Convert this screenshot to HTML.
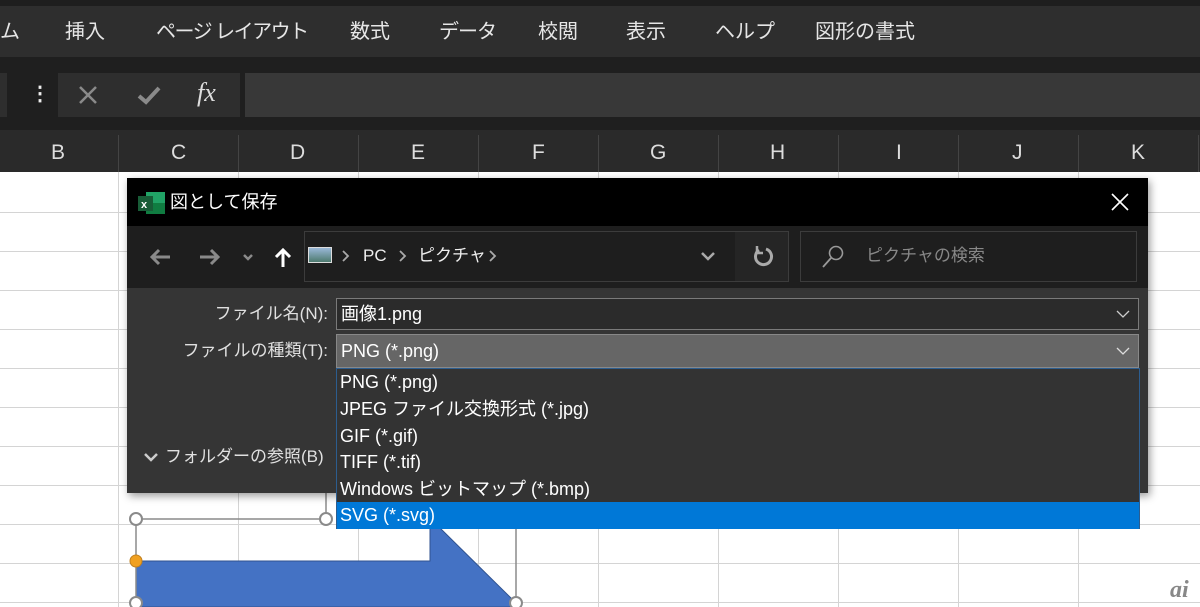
<!DOCTYPE html>
<html><head><meta charset="utf-8"><style>
*{margin:0;padding:0;box-sizing:border-box}
body{width:1200px;height:607px;overflow:hidden;position:relative;background:#fff;font-family:"Liberation Sans","Noto Sans CJK JP",sans-serif}
.a{position:absolute}
.t{position:absolute;white-space:nowrap;line-height:1}
</style></head><body>
<div class="a" style="left:0;top:0;width:1200px;height:6px;background:#1e1e1e"></div>
<div class="a" style="left:0;top:6px;width:1200px;height:51px;background:#2e2e2e"></div>
<div class="t" style="top:22px;left:0;font-size:20px;color:#e6e6e6">ム</div>
<div class="t" style="top:22px;left:65px;font-size:20px;color:#e6e6e6">挿入</div>
<div class="t" style="top:22px;left:156px;font-size:20px;color:#e6e6e6;letter-spacing:-1.5px">ページ レイアウト</div>
<div class="t" style="top:22px;left:350px;font-size:20px;color:#e6e6e6">数式</div>
<div class="t" style="top:22px;left:439px;font-size:20px;color:#e6e6e6;letter-spacing:-1px">データ</div>
<div class="t" style="top:22px;left:538px;font-size:20px;color:#e6e6e6">校閲</div>
<div class="t" style="top:22px;left:626px;font-size:20px;color:#e6e6e6">表示</div>
<div class="t" style="top:22px;left:715px;font-size:20px;color:#e6e6e6">ヘルプ</div>
<div class="t" style="top:22px;left:815px;font-size:20px;color:#e6e6e6">図形の書式</div>
<div class="a" style="left:0;top:57px;width:1200px;height:73px;background:#1f1f1f"></div>
<div class="a" style="left:0;top:73px;width:7px;height:44px;background:#2e2e2e"></div>
<div class="t" style="left:30px;top:84px;font-size:20px;color:#eee;font-weight:bold">⋮</div>
<div class="a" style="left:58px;top:73px;width:182px;height:44px;background:#2e2e2e"></div>
<svg class="a" style="left:78px;top:85px" width="20" height="20"><path d="M2 2L18 18M18 2L2 18" stroke="#8a8a8a" stroke-width="2.5"/></svg>
<svg class="a" style="left:137px;top:85px" width="24" height="20"><path d="M2 11L9 17L22 3" stroke="#8a8a8a" stroke-width="4" fill="none"/></svg>
<div class="t" style="left:197px;top:80px;font-size:26px;color:#ddd;font-style:italic;font-family:'Liberation Serif',serif">fx</div>
<div class="a" style="left:245px;top:73px;width:955px;height:44px;background:#383838"></div>
<div class="a" style="left:0;top:130px;width:1200px;height:42px;background:#2a2a2a"></div>
<svg class="a" style="left:0;top:172px" width="1200" height="435">
<g stroke="#d4d4d4" stroke-width="1">
<line x1="0" y1="40.5" x2="1200" y2="40.5"/><line x1="0" y1="79.5" x2="1200" y2="79.5"/><line x1="0" y1="118.5" x2="1200" y2="118.5"/><line x1="0" y1="157.5" x2="1200" y2="157.5"/><line x1="0" y1="196.5" x2="1200" y2="196.5"/><line x1="0" y1="235.5" x2="1200" y2="235.5"/><line x1="0" y1="274.5" x2="1200" y2="274.5"/><line x1="0" y1="313.5" x2="1200" y2="313.5"/><line x1="0" y1="352.5" x2="1200" y2="352.5"/><line x1="0" y1="391.5" x2="1200" y2="391.5"/><line x1="0" y1="430.5" x2="1200" y2="430.5"/>
<line x1="118.5" y1="0" x2="118.5" y2="435"/><line x1="238.5" y1="0" x2="238.5" y2="435"/><line x1="358.5" y1="0" x2="358.5" y2="435"/><line x1="478.5" y1="0" x2="478.5" y2="435"/><line x1="598.5" y1="0" x2="598.5" y2="435"/><line x1="718.5" y1="0" x2="718.5" y2="435"/><line x1="838.5" y1="0" x2="838.5" y2="435"/><line x1="958.5" y1="0" x2="958.5" y2="435"/><line x1="1078.5" y1="0" x2="1078.5" y2="435"/>
</g>
</svg>
<svg class="a" style="left:0;top:480px" width="1200" height="127">
<polygon points="136,81 430,81 430,48 440,48 516,123 516,127 136,127" fill="#4472c4" stroke="#2f528f"/>
<g stroke="#8a8a8a" stroke-width="1.5" fill="none">
<line x1="136" y1="39" x2="326" y2="39"/><line x1="136" y1="39" x2="136" y2="127"/><line x1="326" y1="13" x2="326" y2="39"/><line x1="516" y1="48" x2="516" y2="127"/>
</g>
<g fill="#fff" stroke="#8a8a8a" stroke-width="2">
<circle cx="136" cy="39" r="6"/><circle cx="326" cy="39" r="6"/><circle cx="136" cy="123" r="6"/><circle cx="516" cy="123" r="6"/>
</g>
<circle cx="136" cy="81" r="6" fill="#f0a020" stroke="#c08020"/>
</svg>
<div class="a" style="left:127px;top:178px;width:1021px;height:315px;background:#353535;box-shadow:2px 3px 8px rgba(0,0,0,.4)"></div>
<div class="a" style="left:127px;top:178px;width:1021px;height:48px;background:#000"></div>
<svg class="a" style="left:138px;top:191px" width="28" height="24"><rect x="8" y="1" width="19" height="22" fill="#21a366"/><rect x="8" y="12" width="19" height="11" fill="#107c41"/><rect x="0" y="5" width="15" height="15" fill="#185c37"/><text x="3" y="17" font-size="11" font-weight="bold" fill="#fff" font-family="Liberation Sans">x</text></svg>
<div class="t" style="left:170px;top:193px;font-size:18px;color:#fff">図として保存</div>
<svg class="a" style="left:1111px;top:193px" width="18" height="18"><path d="M1 1L17 17M17 1L1 17" stroke="#fff" stroke-width="1.6"/></svg>
<div class="a" style="left:127px;top:226px;width:1021px;height:62px;background:#1e1e1e"></div>
<svg class="a" style="left:148px;top:246px" width="150" height="22">
<g stroke="#8a8a8a" stroke-width="3" fill="none">
<path d="M4 11H22M11 4L4 11L11 18"/>
<path d="M52 11H70M63 4L70 11L63 18"/>
<path d="M96 9L100 13L104 9" stroke-width="2.5"/>
</g>
<path d="M135 21V4M128 11L135 4L142 11" stroke="#fff" stroke-width="3" fill="none"/>
</svg>
<div class="a" style="left:304px;top:231px;width:485px;height:51px;border:1px solid #3c3c3c"></div>
<div class="a" style="left:735px;top:232px;width:53px;height:49px;background:#252525"></div>
<div class="a" style="left:308px;top:247px;width:24px;height:16px;background:linear-gradient(#9ab8d8,#4d7a6e);border:1px solid #ddd"></div>
<svg class="a" style="left:340px;top:248px" width="160" height="16"><g stroke="#aaa" stroke-width="1.8" fill="none"><path d="M3 3L8 8L3 13"/><path d="M60 3L65 8L60 13"/><path d="M150 3L155 8L150 13"/></g></svg>
<div class="t" style="left:363px;top:247px;font-size:17px;color:#eee">PC</div>
<div class="t" style="left:418px;top:247px;font-size:17px;color:#eee">ピクチャ</div>
<svg class="a" style="left:700px;top:250px" width="16" height="12"><path d="M2 3L8 9L14 3" stroke="#aaa" stroke-width="2.5" fill="none"/></svg>
<svg class="a" style="left:752px;top:245px" width="22" height="22"><path d="M7 5A8 8 0 1 0 14 4" stroke="#aaa" stroke-width="3" fill="none"/><path d="M5 1V8H11" stroke="#aaa" stroke-width="2.5" fill="none"/></svg>
<div class="a" style="left:800px;top:231px;width:337px;height:51px;border:1px solid #3c3c3c"></div>
<svg class="a" style="left:820px;top:244px" width="26" height="26"><circle cx="16" cy="9" r="6.5" stroke="#999" stroke-width="1.6" fill="none"/><path d="M11 14L3 23" stroke="#999" stroke-width="1.8"/></svg>
<div class="t" style="left:866px;top:247px;font-size:17px;color:#888">ピクチャの検索</div>
<div class="t" style="right:872px;top:305px;font-size:17px;color:#e0e0e0">ファイル名(N):</div>
<div class="t" style="right:872px;top:342px;font-size:17px;color:#e0e0e0">ファイルの種類(T):</div>
<div class="a" style="left:336px;top:298px;width:803px;height:32px;background:#2b2b2b;border:1px solid #7a7a7a"></div>
<div class="t" style="left:341px;top:305px;font-size:18px;color:#fff">画像1.png</div>
<svg class="a" style="left:1116px;top:309px" width="14" height="10"><path d="M1 2L7 8L13 2" stroke="#ccc" stroke-width="1.3" fill="none"/></svg>
<div class="a" style="left:336px;top:334px;width:803px;height:34px;background:#666;border:1px solid #888"></div>
<div class="t" style="left:341px;top:342px;font-size:18px;color:#fff">PNG (*.png)</div>
<svg class="a" style="left:1116px;top:346px" width="14" height="10"><path d="M1 2L7 8L13 2" stroke="#ddd" stroke-width="1.3" fill="none"/></svg>
<svg class="a" style="left:143px;top:451px" width="16" height="12"><path d="M2 3L8 9L14 3" stroke="#ccc" stroke-width="2.5" fill="none"/></svg>
<div class="t" style="left:165px;top:448px;font-size:17px;color:#e0e0e0">フォルダーの参照(B)</div>
<div class="a" style="left:1136px;top:476px;width:12px;height:17px;color:#ddd;font-size:10px;line-height:6px">⁝</div>
<div class="a" style="left:336px;top:368px;width:804px;height:161px;background:#333;border:1px solid #2c5d8f"></div>
<div class="a" style="left:337px;top:502px;width:802px;height:27px;background:#0078d7"></div>
<div class="t" style="left:340px;top:373px;font-size:18px;color:#fff">PNG (*.png)</div>
<div class="t" style="left:340px;top:400px;font-size:18px;color:#fff">JPEG ファイル交換形式 (*.jpg)</div>
<div class="t" style="left:340px;top:427px;font-size:18px;color:#fff">GIF (*.gif)</div>
<div class="t" style="left:340px;top:453px;font-size:18px;color:#fff">TIFF (*.tif)</div>
<div class="t" style="left:340px;top:480px;font-size:18px;color:#fff">Windows ビットマップ (*.bmp)</div>
<div class="t" style="left:340px;top:506px;font-size:18px;color:#fff">SVG (*.svg)</div>
<div class="t" style="left:1170px;top:578px;font-size:24px;color:#888;font-style:italic;font-weight:bold;font-family:'Liberation Serif',serif">ai</div>
<div class="t" style="top:142px;left:0;width:1200px;font-size:21px;color:#ddd">
<span class="t" style="left:51px">B</span><span class="t" style="left:171px">C</span><span class="t" style="left:290px">D</span><span class="t" style="left:411px">E</span><span class="t" style="left:532px">F</span><span class="t" style="left:650px">G</span><span class="t" style="left:770px">H</span><span class="t" style="left:896px">I</span><span class="t" style="left:1012px">J</span><span class="t" style="left:1131px">K</span>
</div>
<svg class="a" style="left:0;top:130px" width="1200" height="42"><g stroke="#444"><line x1="118.5" y1="5" x2="118.5" y2="42"/><line x1="238.5" y1="5" x2="238.5" y2="42"/><line x1="358.5" y1="5" x2="358.5" y2="42"/><line x1="478.5" y1="5" x2="478.5" y2="42"/><line x1="598.5" y1="5" x2="598.5" y2="42"/><line x1="718.5" y1="5" x2="718.5" y2="42"/><line x1="838.5" y1="5" x2="838.5" y2="42"/><line x1="958.5" y1="5" x2="958.5" y2="42"/><line x1="1078.5" y1="5" x2="1078.5" y2="42"/><line x1="1198.5" y1="5" x2="1198.5" y2="42"/></g></svg>
</body></html>
